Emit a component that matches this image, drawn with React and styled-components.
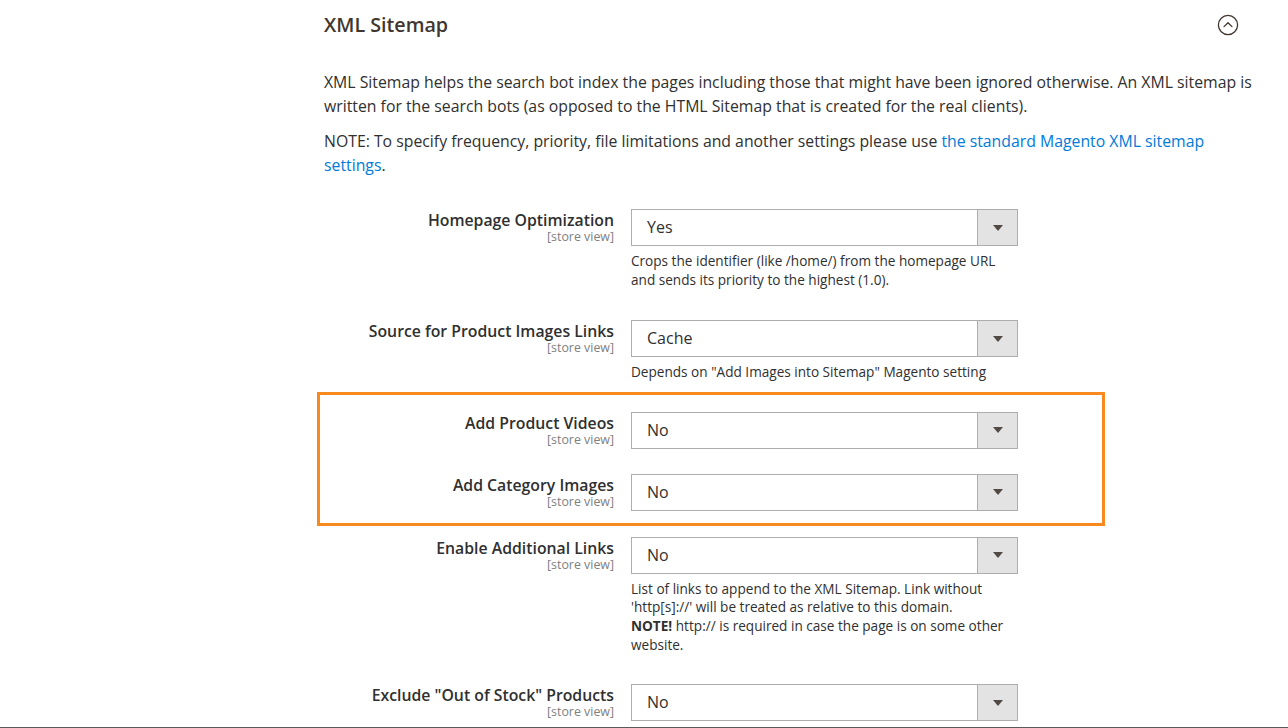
import React from 'react';
import styled, { createGlobalStyle } from 'styled-components';

const GlobalStyle = createGlobalStyle`
  html, body {
    margin: 0;
    padding: 0;
    background: #ffffff;
  }
  body {
    font-family: "Open Sans", "Noto Sans", sans-serif;
    color: #303030;
    overflow: hidden;
  }
`;

const Page = styled.div`
  width: 1288px;
  height: 728px;
  overflow: hidden;
  display: flex;
  flex-direction: column;
`;

const Section = styled.div`
  margin-left: 324px;
  width: 934px;
`;

const Header = styled.div`
  display: flex;
  align-items: center;
  justify-content: space-between;
  padding: 11px 19px 0 0;
  height: 28px;
`;

const Title = styled.h2`
  margin: 0;
  font-size: 19.7px;
  line-height: 28px;
  font-weight: 600;
  color: #41362f;
`;

const CollapseButton = styled.button`
  border: none;
  background: none;
  padding: 0;
  width: 22px;
  height: 22px;
  display: flex;
  align-items: center;
  justify-content: center;
  cursor: pointer;
`;

const Intro = styled.div`
  margin-top: 31px;
`;

const Paragraph = styled.p`
  margin: 0 0 11px;
  font-size: 15.8px;
  line-height: 24px;
  color: #303030;
`;

const Link = styled.a`
  color: #007bdb;
  text-decoration: none;
`;

const Fields = styled.div`
  margin-top: 32px;
  display: flex;
  flex-direction: column;
`;

const Field = styled.div`
  display: grid;
  grid-template-columns: 290px 387px;
  column-gap: 17px;
  margin-bottom: ${p => p.$gap}px;
`;

const LabelCol = styled.div`
  text-align: right;
  padding-top: 1px;
`;

const Label = styled.div`
  font-size: 15.8px;
  line-height: 20px;
  font-weight: 600;
  color: #303030;
`;

const Scope = styled.div`
  font-size: 12.4px;
  line-height: 14px;
  color: #808080;
`;

const Control = styled.div`
  display: flex;
  flex-direction: column;
`;

const Select = styled.div`
  display: flex;
  height: 37px;
  box-sizing: border-box;
  border: 1px solid #adadad;
  background: #ffffff;
`;

const SelectValue = styled.div`
  flex: 1;
  padding-left: 15px;
  font-size: 16px;
  line-height: 35px;
  color: #303030;
`;

const SelectArrow = styled.div`
  width: 39px;
  border-left: 1px solid #adadad;
  background: #e3e3e3;
  display: flex;
  align-items: center;
  justify-content: center;

  &::after {
    content: '';
    border-left: 5px solid transparent;
    border-right: 5px solid transparent;
    border-top: 6px solid #514943;
  }
`;

const Note = styled.div`
  margin-top: 6px;
  font-size: 13.6px;
  line-height: 18.6px;
  color: #303030;

  b {
    font-weight: 700;
  }
`;

const Highlight = styled.div`
  width: 788px;
  box-sizing: border-box;
  margin-left: -7px;
  margin-bottom: 11px;
  border: 3px solid #f7891e;
  padding: 17px 0 12px 4px;
`;

const BottomRule = styled.div`
  margin-top: 6px;
  height: 2px;
  background: #5a5a5a;
  flex-shrink: 0;
`;

function CollapseIcon() {
  return (
    <svg width="22" height="22" viewBox="0 0 22 22" fill="none">
      <circle cx="11" cy="11" r="9.6" stroke="#41362f" strokeWidth="1.3" />
      <path d="M7 12.6 L11 8.8 L15 12.6" stroke="#41362f" strokeWidth="1.3" strokeLinecap="round" strokeLinejoin="round" />
    </svg>
  );
}

function SelectField({ label, value, note, gap }) {
  return (
    <Field $gap={gap}>
      <LabelCol>
        <Label>{label}</Label>
        <Scope>[store view]</Scope>
      </LabelCol>
      <Control>
        <Select>
          <SelectValue>{value}</SelectValue>
          <SelectArrow />
        </Select>
        {note && <Note>{note}</Note>}
      </Control>
    </Field>
  );
}

export default function App() {
  return (
    <Page>
      <GlobalStyle />
      <Section>
        <Header>
          <Title>XML Sitemap</Title>
          <CollapseButton aria-label="Collapse">
            <CollapseIcon />
          </CollapseButton>
        </Header>
        <Intro>
          <Paragraph>
            XML Sitemap helps the search bot index the pages including those that might have been ignored otherwise. An XML sitemap is written for the search bots (as opposed to the HTML Sitemap that is created for the real clients).
          </Paragraph>
          <Paragraph>
            NOTE: To specify frequency, priority, file limitations and another settings please use{' '}
            <Link href="#">the standard Magento XML sitemap settings</Link>.
          </Paragraph>
        </Intro>
        <Fields>
          <SelectField
            label="Homepage Optimization"
            value="Yes"
            gap={31}
            note="Crops the identifier (like /home/) from the homepage URL and sends its priority to the highest (1.0)."
          />
          <SelectField
            label="Source for Product Images Links"
            value="Cache"
            gap={10}
            note={'Depends on "Add Images into Sitemap" Magento setting'}
          />
          <Highlight>
            <SelectField label="Add Product Videos" value="No" gap={25} />
            <SelectField label="Add Category Images" value="No" gap={0} />
          </Highlight>
          <SelectField
            label="Enable Additional Links"
            value="No"
            gap={30}
            note={
              <>
                List of links to append to the XML Sitemap. Link without 'http[s]://' will be treated as relative to this domain.
                <br />
                <b>NOTE!</b> http:// is required in case the page is on some other website.
              </>
            }
          />
          <SelectField label={'Exclude "Out of Stock" Products'} value="No" gap={0} />
        </Fields>
      </Section>
      <BottomRule />
    </Page>
  );
}
